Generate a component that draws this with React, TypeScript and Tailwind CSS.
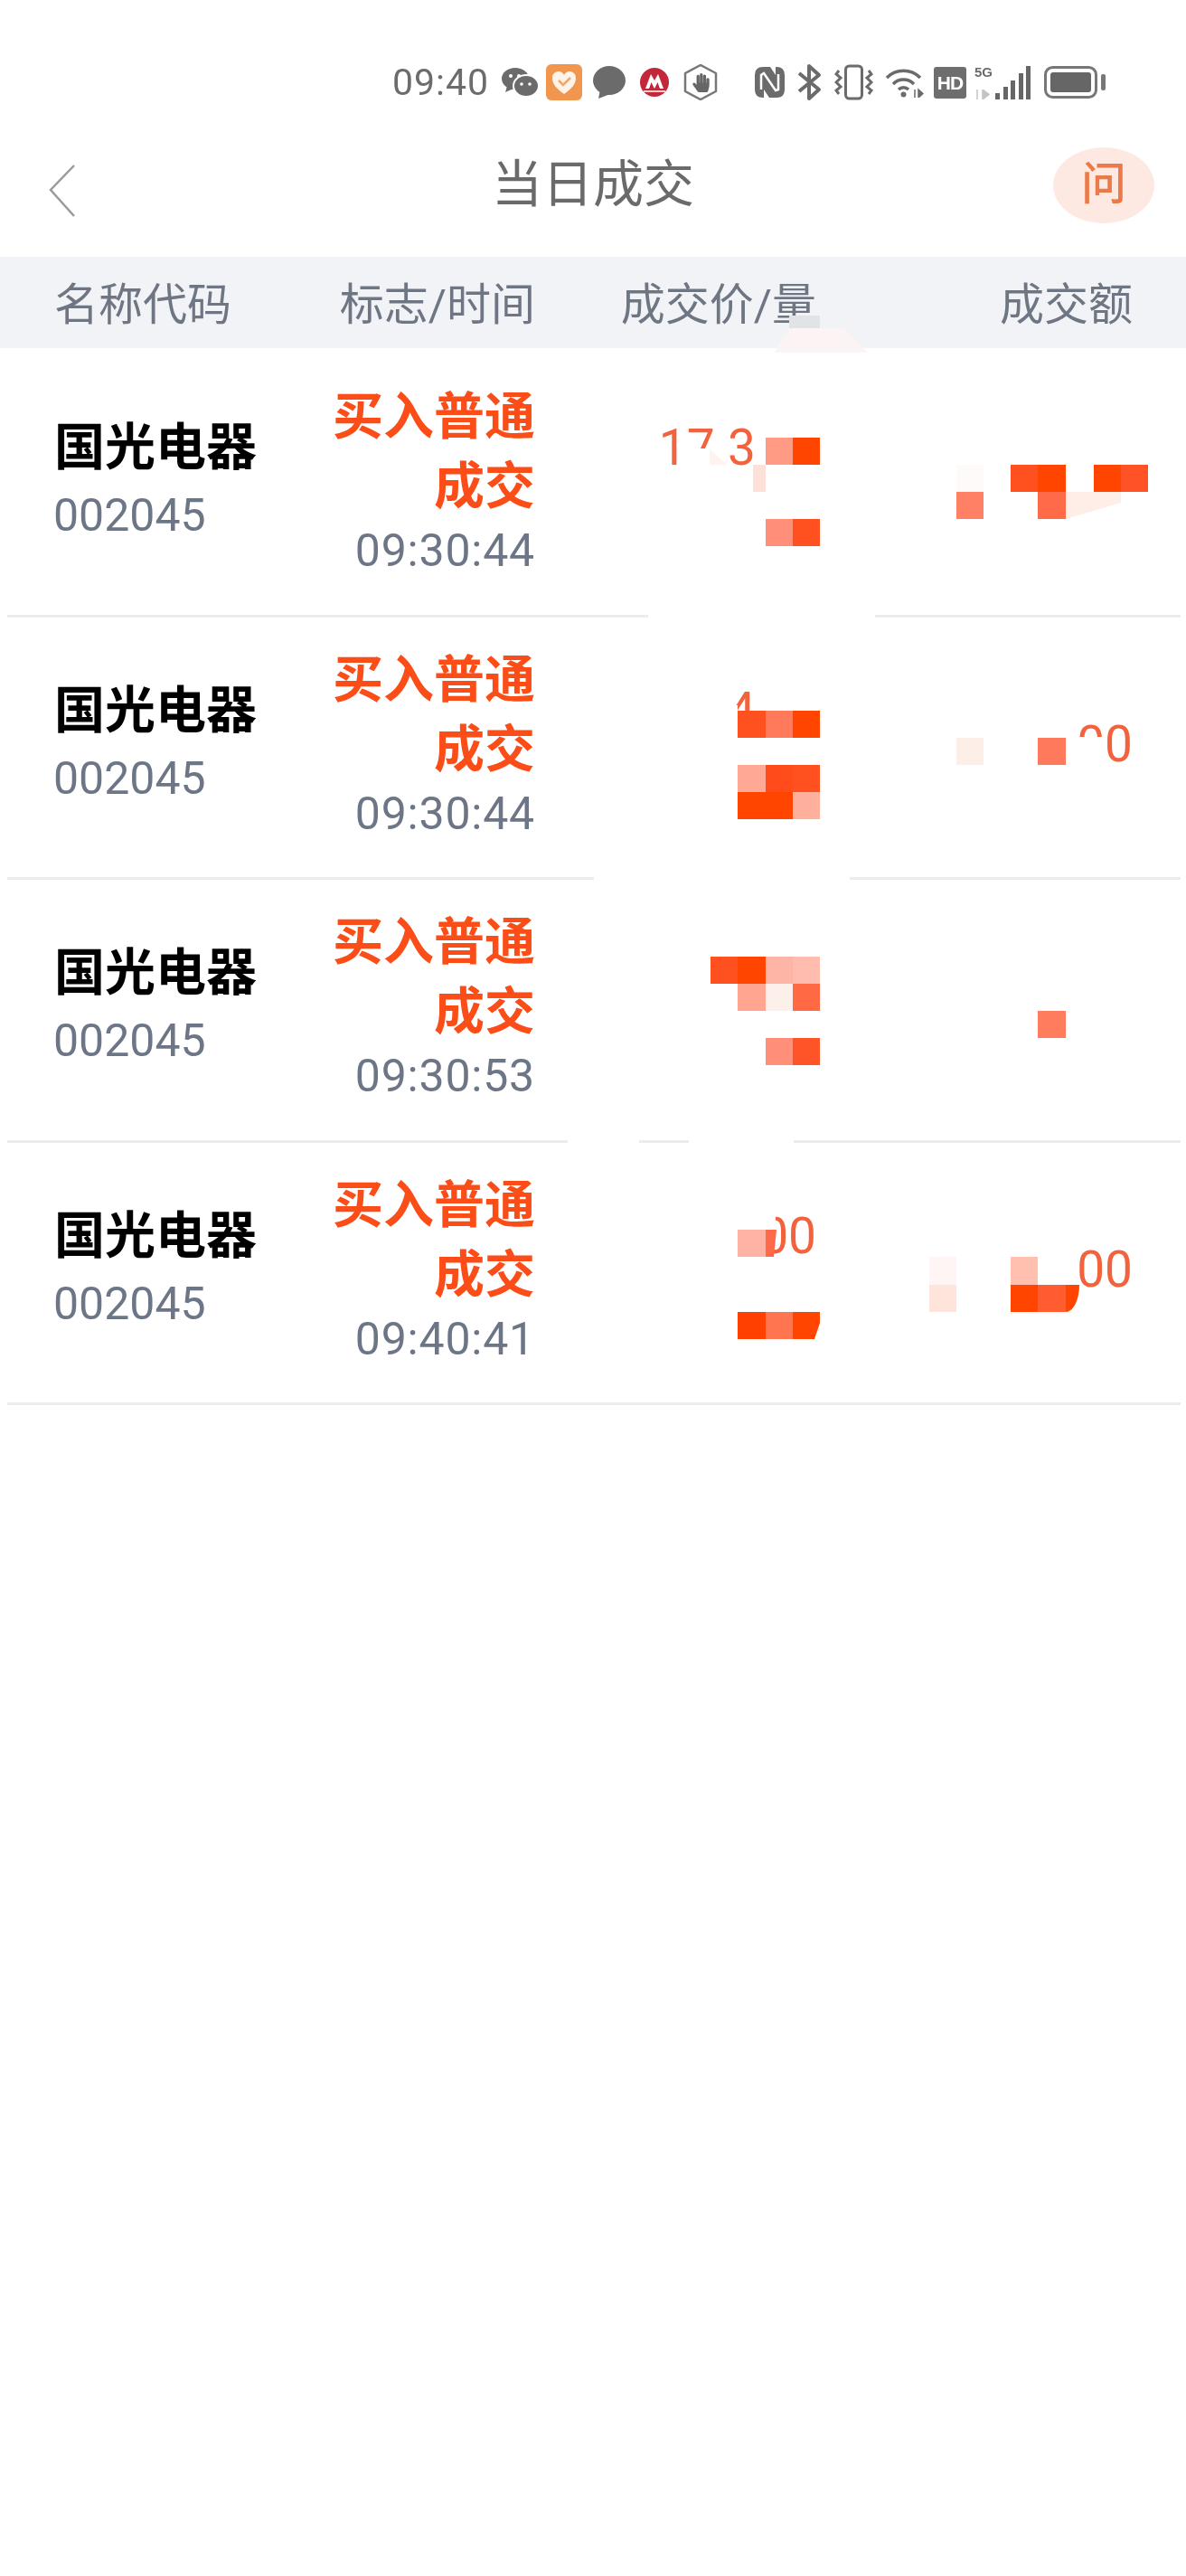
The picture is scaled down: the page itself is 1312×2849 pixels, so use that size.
import React from "react";
import { FaHandPaper } from "react-icons/fa";

const GRAY = "#6b6b6b";

function StatusBar() {
  return (
    <div className="h-[126px] pt-[70px] pl-[434px] blur-[0.5px]">
      <div className="flex h-[42px] items-center">
        <span className="w-[111px] text-[41px] leading-[42px] tracking-[1px] text-[#6c6c6c]">09:40</span>
        <svg className="ml-[10px] shrink-0" width="40" height="32" viewBox="0 0 40 32">
          <ellipse cx="15" cy="12" rx="15" ry="12" fill={GRAY} />
          <path d="M6 20 L4 27 L13 23Z" fill={GRAY} />
          <ellipse cx="27" cy="20" rx="14" ry="12" fill={GRAY} stroke="#fff" strokeWidth="2" />
          <circle cx="10" cy="9" r="2" fill="#fff" />
          <circle cx="19" cy="9" r="2" fill="#fff" />
          <circle cx="22" cy="18" r="1.8" fill="#fff" />
          <circle cx="31" cy="18" r="1.8" fill="#fff" />
        </svg>
        <svg className="ml-[9px] shrink-0" width="40" height="40" viewBox="0 0 40 40">
          <rect width="40" height="40" rx="6" fill="#f0964e" />
          <path d="M20 33 C10 26 7 21 7 15 C7 10 11 8 14 8 C17 8 19 10 20 12 C21 10 23 8 26 8 C29 8 33 10 33 15 C33 21 30 26 20 33Z" fill="#fdf3e8" />
          <path d="M14 18 L19 23 L27 15" fill="none" stroke="#f0a768" strokeWidth="2.5" />
        </svg>
        <svg className="ml-[12px] shrink-0" width="36" height="36" viewBox="0 0 36 36">
          <ellipse cx="18" cy="16" rx="18" ry="16" fill={GRAY} />
          <path d="M8 26 L6 36 L19 31Z" fill={GRAY} />
        </svg>
        <svg className="ml-[16px] shrink-0" width="32" height="32" viewBox="0 0 32 32">
          <circle cx="16" cy="16" r="16" fill="#c2283a" />
          <path d="M6 23 L12 7 L16 14 L20 7 L26 23 L22 23 L19.5 16 L16 23 L12.5 16 L10 23Z" fill="#fff" />
          <path d="M4 26 H28" stroke="#fff" strokeWidth="1.5" />
        </svg>
        <div className="ml-[15px] grid h-[40px] w-[40px] shrink-0 place-items-center">
          <svg className="[grid-area:1/1]" width="40" height="40" viewBox="0 0 40 40">
            <polygon points="20,1 37,10 37,30 20,39 3,30 3,10" fill="none" stroke="#777" strokeWidth="2.5" strokeLinejoin="round" />
          </svg>
          <FaHandPaper className="[grid-area:1/1] text-[21px] text-[#666]" />
        </div>
        <svg className="ml-[40px] shrink-0" width="33" height="34" viewBox="0 0 33 34">
          <path d="M9 0 H17 L23 9 V0 H24 Q33 0 33 9 V25 Q33 34 24 34 H16 L10 25 V34 H9 Q0 34 0 25 V9 Q0 0 9 0Z" fill={GRAY} />
          <path d="M7 25 V9 L10 7 L23 26 L26 25 V8" fill="none" stroke="#fff" strokeWidth="2.5" />
        </svg>
        <svg className="ml-[13px] shrink-0" width="29" height="42" viewBox="0 0 29 42">
          <path d="M3 11 L25 29 L14 39 V3 L25 13 L3 31" fill="none" stroke={GRAY} strokeWidth="4" strokeLinejoin="round" />
        </svg>
        <svg className="ml-[13px] shrink-0" width="43" height="40" viewBox="0 0 43 40">
          <rect x="12.5" y="2" width="18" height="36" rx="4" fill="none" stroke={GRAY} strokeWidth="3" />
          <path d="M5 7 L2 11 L7 15 L2 20 L7 25 L2 29 L5 33" fill="none" stroke={GRAY} strokeWidth="3" />
          <path d="M38 7 L41 11 L36 15 L41 20 L36 25 L41 29 L38 33" fill="none" stroke={GRAY} strokeWidth="3" />
        </svg>
        <svg className="ml-[13px] shrink-0" width="43" height="34" viewBox="0 0 43 34">
          <path d="M2 12 A26 26 0 0 1 39 12" fill="none" stroke={GRAY} strokeWidth="3.5" />
          <path d="M9 19 A16 16 0 0 1 32 19" fill="none" stroke={GRAY} strokeWidth="3.5" />
          <path d="M15 25 A8 8 0 0 1 26 25" fill="none" stroke={GRAY} strokeWidth="3.5" />
          <circle cx="20.5" cy="30.5" r="3" fill={GRAY} />
          <path d="M33 25 V34 M37 25 L42 29.5 L37 34Z" fill={GRAY} stroke={GRAY} strokeWidth="1.5" />
        </svg>
        <div className="ml-[11px] flex h-[35px] w-[36px] shrink-0 items-center justify-center rounded-[3px] bg-[#6e6e6e] font-['Liberation_Sans',sans-serif] text-[21px] font-bold leading-none tracking-[-1px] text-white">
          HD
        </div>
        <div className="ml-[9px] flex h-[38px] w-[62px] shrink-0 items-end justify-between">
          <div className="flex h-full w-[22px] flex-col justify-between">
            <span className="font-['Liberation_Sans',sans-serif] text-[15px] font-bold leading-[15px] text-[#6b6b6b]">5G</span>
            <svg width="20" height="11" viewBox="0 0 20 11">
              <path d="M3 0 V11 M9 0 L16 5.5 L9 11Z" fill="#c4c4c4" stroke="#c4c4c4" strokeWidth="1.5" />
            </svg>
          </div>
          <div className="flex h-full items-end gap-[3.5px]">
            <div className="h-[7px] w-[5px] bg-[#666]" />
            <div className="h-[14px] w-[5px] bg-[#666]" />
            <div className="h-[21px] w-[5px] bg-[#666]" />
            <div className="h-[29px] w-[5px] bg-[#666]" />
            <div className="h-[37px] w-[5px] bg-[#666]" />
          </div>
        </div>
        <svg className="ml-[15px] shrink-0" width="68" height="36" viewBox="0 0 68 36">
          <rect x="1.5" y="1.5" width="56" height="33" rx="8" fill="none" stroke="#777" strokeWidth="3" />
          <rect x="7" y="7" width="45" height="22" rx="3" fill="#666" />
          <rect x="63" y="9" width="5" height="18" rx="2" fill="#777" />
        </svg>
      </div>
    </div>
  );
}

function NavBar() {
  return (
    <div className="grid h-[158px] grid-cols-[147px_1fr_147px] items-center">
      <svg className="ml-[54px] mt-[12px]" width="30" height="58" viewBox="0 0 30 58">
        <path d="M28 1 L2 28 L28 57" fill="none" stroke="#9a9a9a" strokeWidth="2.5" />
      </svg>
      <h1 className="pb-[2px] text-center text-[56px] font-normal leading-none text-[#6a6a6a]">当日成交</h1>
      <div className="flex h-[84px] w-[112px] items-center justify-center rounded-[50%] bg-[#fde9e2] pb-[3px] text-[50px] font-medium leading-none text-[#ea7a48]">
        问
      </div>
    </div>
  );
}

function TableHeader() {
  return (
    <div className="relative grid h-[101px] grid-cols-[366px_226px_311px_350px] items-center bg-[#f1f3f7] pt-[5px] text-right text-[49px] leading-none text-[#6f7683]">
      <span className="pl-[60px] text-left">名称代码</span>
      <span>标志/时间</span>
      <span>成交价/量</span>
      <span>成交额</span>
      <div className="absolute left-[873px] top-[65px] h-[14px] w-[34px] bg-[#e0e4e6]" />
      <div className="absolute left-[857px] top-[79px] h-[27px] w-[103px] bg-[#fcf4f4] [clip-path:polygon(15%_0,75%_0,100%_100%,0_100%)]" />
    </div>
  );
}

type RowProps = {
  height: string;
  time: string;
  price?: React.ReactNode;
  amount?: React.ReactNode;
  marks: string[];
};

const B = "absolute ";

function Row({ height, time, price, amount, marks }: RowProps) {
  return (
    <div className={"relative " + height}>
      <div className="grid h-full grid-cols-[366px_226px_311px_350px]">
        <div className="pt-[76px]">
          <div className="pl-[60px] text-[56px] font-bold leading-[56px] text-black">国光电器</div>
          <div className="mt-[19px] pl-[59px] text-[50px] leading-[56px] text-[#6d7686]">002045</div>
        </div>
        <div className="pt-[32px] text-right">
          <div className="text-[56px] font-bold leading-[77px] text-[#fb4d17]">买入普通成交</div>
          <div className="-mt-[2px] text-[50px] leading-[68px] tracking-[0.8px] text-[#6d7686]">{time}</div>
        </div>
        <div className="pt-[77px] text-right text-[55px] font-normal leading-[54px] text-[#f2623c]">{price}</div>
        <div className="pt-[114px] text-right text-[55px] font-normal leading-[54px] text-[#f2623c]">{amount}</div>
      </div>
      <div className="absolute -bottom-[1px] left-[8px] right-[6px] h-[3px] bg-[#ececec]" />
      {marks.map((m, i) => (
        <div key={i} className={B + m} />
      ))}
    </div>
  );
}

export default function App() {
  return (
    <div className="h-[2849px] w-[1312px] overflow-hidden bg-white font-[Roboto,'Noto_Sans_CJK_SC',sans-serif]">
      <StatusBar />
      <NavBar />
      <TableHeader />
      <div className="pt-[6px]">
        <Row
          height="h-[291px]"
          time="09:30:44"
          price={<span className="pr-[67px]">17.3</span>}
          marks={[
            "left-[762px] top-[105px] h-[22px] w-[44px] bg-white",
            "left-[785px] top-[106px] h-[17px] w-[20px] bg-[#fff3ef] [clip-path:polygon(0_0,100%_100%,0_100%)]",
            "left-[847px] top-[93px] h-[30px] w-[30px] bg-[#ff9a85]",
            "left-[877px] top-[93px] h-[30px] w-[30px] bg-[#ff4500]",
            "left-[833px] top-[123px] h-[30px] w-[14px] bg-[#fde0d8]",
            "left-[847px] top-[183px] h-[30px] w-[30px] bg-[#ff8f78]",
            "left-[877px] top-[183px] h-[30px] w-[30px] bg-[#ff5020]",
            "left-[1058px] top-[123px] h-[30px] w-[30px] bg-[#fffafa]",
            "left-[1058px] top-[153px] h-[30px] w-[30px] bg-[#ff8065]",
            "left-[1118px] top-[123px] h-[30px] w-[30px] bg-[#ff5020]",
            "left-[1148px] top-[123px] h-[30px] w-[31px] bg-[#ff4500]",
            "left-[1148px] top-[153px] h-[30px] w-[31px] bg-[#ff6a48]",
            "left-[1179px] top-[153px] h-[30px] w-[61px] bg-[#ffeee8] [clip-path:polygon(0_0,100%_0,100%_40%,0_100%)]",
            "left-[1210px] top-[123px] h-[30px] w-[30px] bg-[#ff4500]",
            "left-[1240px] top-[123px] h-[30px] w-[30px] bg-[#ff5226]",
            "left-[717px] -bottom-[1px] h-[3px] w-[251px] bg-white",
          ]}
        />
        <Row
          height="h-[290px]"
          time="09:30:44"
          price={<span className="pr-[67px]">4</span>}
          amount="00"
          marks={[
            "left-[796px] top-[98px] h-[36px] w-[20px] bg-white",
            "left-[816px] top-[104px] h-[30px] w-[31px] bg-[#ff5020]",
            "left-[847px] top-[104px] h-[30px] w-[30px] bg-[#ff7a5a]",
            "left-[877px] top-[104px] h-[30px] w-[30px] bg-[#ff4500]",
            "left-[816px] top-[164px] h-[30px] w-[31px] bg-[#ffa896]",
            "left-[847px] top-[164px] h-[30px] w-[30px] bg-[#ff4c1a]",
            "left-[877px] top-[164px] h-[30px] w-[30px] bg-[#ff5020]",
            "left-[816px] top-[194px] h-[30px] w-[31px] bg-[#ff4500]",
            "left-[847px] top-[194px] h-[30px] w-[30px] bg-[#ff4500]",
            "left-[877px] top-[194px] h-[30px] w-[30px] bg-[#ffb09c]",
            "left-[1058px] top-[134px] h-[30px] w-[30px] bg-[#fdeee8]",
            "left-[1180px] top-[133px] h-[40px] w-[41px] bg-white",
            "left-[1148px] top-[134px] h-[30px] w-[31px] bg-[#ff7a5c]",
            "left-[657px] -bottom-[1px] h-[3px] w-[283px] bg-white",
          ]}
        />
        <Row
          height="h-[291px]"
          time="09:30:53"
          marks={[
            "left-[786px] top-[86px] h-[30px] w-[30px] bg-[#ff5020]",
            "left-[816px] top-[86px] h-[30px] w-[31px] bg-[#ff4500]",
            "left-[847px] top-[86px] h-[30px] w-[30px] bg-[#ffb5a5]",
            "left-[877px] top-[86px] h-[30px] w-[30px] bg-[#ffbcaf]",
            "left-[816px] top-[116px] h-[30px] w-[31px] bg-[#ffa590]",
            "left-[847px] top-[116px] h-[30px] w-[30px] bg-[#fdf0ea]",
            "left-[877px] top-[116px] h-[30px] w-[30px] bg-[#ff6a45]",
            "left-[847px] top-[176px] h-[30px] w-[30px] bg-[#ff8f78]",
            "left-[877px] top-[176px] h-[30px] w-[30px] bg-[#ff5428]",
            "left-[1148px] top-[146px] h-[30px] w-[31px] bg-[#ff7d5e]",
            "left-[628px] -bottom-[1px] h-[3px] w-[79px] bg-white",
            "left-[762px] -bottom-[1px] h-[3px] w-[116px] bg-white",
          ]}
        />
        <Row
          height="h-[290px]"
          time="09:40:41"
          price="00"
          amount="00"
          marks={[
            "left-[838px] top-[78px] h-[22px] w-[20px] bg-white",
            "left-[816px] top-[97px] h-[30px] w-[31px] bg-[#ffb3a5]",
            "left-[847px] top-[97px] h-[30px] w-[12px] bg-[#ff6a48] [clip-path:polygon(0_0,100%_0,75%_100%,0_100%)]",
            "left-[816px] top-[188px] h-[30px] w-[31px] bg-[#ff4000]",
            "left-[847px] top-[188px] h-[30px] w-[30px] bg-[#ff7550]",
            "left-[877px] top-[188px] h-[30px] w-[30px] bg-[#ff4500] [clip-path:polygon(0_0,100%_0,100%_40%,80%_100%,0_100%)]",
            "left-[1028px] top-[127px] h-[31px] w-[30px] bg-[#fff5f5]",
            "left-[1028px] top-[158px] h-[30px] w-[30px] bg-[#ffe4dc]",
            "left-[1118px] top-[127px] h-[31px] w-[30px] bg-[#ffc0b0]",
            "left-[1118px] top-[158px] h-[30px] w-[30px] bg-[#ff4500]",
            "left-[1148px] top-[158px] h-[30px] w-[31px] bg-[#ff5c30]",
            "left-[1179px] top-[158px] h-[30px] w-[15px] rounded-br-[15px_30px] bg-[#ff4500]",
          ]}
        />
      </div>
    </div>
  );
}
